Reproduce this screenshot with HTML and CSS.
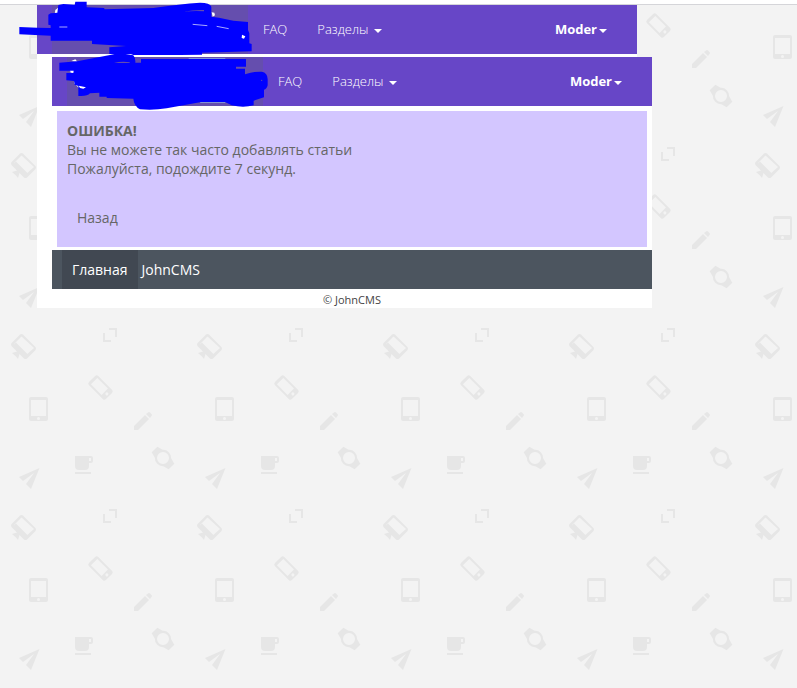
FILE: index.html
```
<!DOCTYPE html>
<html lang="ru">
<head>
    <meta charset="UTF-8">
    <meta name="viewport" content="width=device-width, initial-scale=1.0">
    <title>JohnCMS</title>
    <link rel="stylesheet" href="styles.css">
</head>
<body>

<!-- Background pattern -->
<svg class="pattern" aria-hidden="true">
    <defs>
        <pattern id="gadgets" x="0" y="144" width="186" height="181" patternUnits="userSpaceOnUse">
            <g fill="#e6e6e6">
                <!-- monitor -->
                <path fill-rule="evenodd" d="M20 9.500Q21.500 8.500 23 9.500L35.500 22Q36.500 23.500 35.500 25L27 33.500Q25.500 34.500 24 33.500L19.500 29L18 34L16 31.500L12 28L17 26.500L11.500 21Q10.500 19.500 11.500 18Z M21.500 11.500L14 19L25.500 30.500L34 23Z"/>
                <path d="M13 18L26 31L24.500 33L12 21Z M14 19L27 32L28 29.500L16 17.500Z"/>
                <!-- expand -->
                <path d="M109 3H117V12H115V5H109Z M103 8H105V15H111V17H103Z"/>
                <!-- phone -->
                <g transform="translate(100.500 62.500) rotate(-45)">
                    <path fill-rule="evenodd" d="M-4 -12H4Q6.500 -12 6.500 -10V10Q6.500 12 4 12H-4Q-6.500 12 -6.500 10V-10Q-6.500 -12 -4 -12Z M-4.500 -9V6H4.500V-9Z M0 7.500A1.500 1.500 0 1 0 0 10.500A1.500 1.500 0 1 0 0 7.500Z"/>
                </g>
                <!-- tablet -->
                <path fill-rule="evenodd" d="M31 72H46Q48 72 48 74V94Q48 96 46 96H31Q29 96 29 94V74Q29 72 31 72Z M31 75V91H46V75Z M38.500 92A1.500 1.500 0 1 0 38.500 95A1.500 1.500 0 1 0 38.500 92Z"/>
                <!-- pencil -->
                <path d="M134 105V101L145 90L149 94L138 105Z M146 89L148 87.500Q149 86.500 150 87.500L151.500 89Q152.500 90 151.500 91L150 93Z"/>
                <!-- cup -->
                <path fill-rule="evenodd" d="M75 131H91Q93 131 93 133V136Q93 138 91 138H89V141Q89 145 85 145H79Q75 145 75 141Z M89 133V136H91V133Z M75 147H91V149H75Z"/>
                <!-- watch -->
                <g transform="translate(163 133) rotate(-45)">
                    <path fill-rule="evenodd" d="M-4 -12H4L5.500 -6A8 8 0 0 1 5.500 6L4 12H-4L-5.500 6A8 8 0 0 1 -5.500 -6Z M0 -6A6 6 0 1 0 0 6A6 6 0 1 0 0 -6Z"/>
                </g>
                <!-- paper plane -->
                <path d="M39.500 143L19 152L23 156L34 148L26 159L31 164Z"/>
            </g>
        </pattern>
    </defs>
    <rect width="100%" height="100%" fill="url(#gadgets)"/>
</svg>

<div class="topline"></div>

<div class="page">
    <nav class="navbar">
        <a class="brand" href="#" aria-label="Главная страница"></a>
        <a class="nav-link" href="#">FAQ</a>
        <button class="nav-link" type="button">Разделы <span class="caret"></span></button>
        <button class="nav-link user" type="button">Moder<span class="caret"></span></button>
        <svg class="scribble first" viewBox="57 0 705 168" aria-hidden="true">
            <path fill="#fff" d="M166 30L176 22V42L164 42Z"/>
            <path fill="#00f" d="M58 81L112 83L152 84V76L145 74V44L152 40L172 38L175 15L190 12L224 14L226 5H260V22L312 24L314 28L460 24Q540 12 600 8Q630 8 634 20V50L657 53L700 62L744 66V90L748 100V130L755 132V154L606 158V164L540 165H400L392 162H328V142L378 138L276 132V122H152V107L58 103Z"/>
            <path fill="#654eae" d="M552 35Q580 29 612 30V34Q585 32 552 35Z"/>
            <path fill="none" stroke="#fff" stroke-width="2" d="M578 73L622 77M650 79L686 86M178 81H202"/>
            <path fill="#fff" d="M635 37L643 38L645 46L638 50Z M726 104L736 109L732 116L725 114Z"/>
        </svg>
    </nav>

    <div class="inner">
        <nav class="navbar">
            <a class="brand" href="#" aria-label="Главная страница"></a>
            <a class="nav-link" href="#">FAQ</a>
            <button class="nav-link" type="button">Разделы <span class="caret"></span></button>
            <button class="nav-link user" type="button">Moder<span class="caret"></span></button>
            <svg class="scribble second" viewBox="177 159 630 174" aria-hidden="true">
                <path fill="#fff" d="M214 183L226 178L232 185Z M209 212H222V220H212Z M222 242L258 262L240 267L222 250Z"/>
                <path fill="none" stroke="#9cc8ef" stroke-width="2" d="M566 176H676M600 307H676"/>
                <path fill="#00f" d="M178 188L232 184L330 165Q350 160 372 161L400 166Q407 174 406 188H423V177H738V200H708V206H735V223Q760 214 785 215Q804 218 803 240V256Q800 268 792 269V292L761 302V316Q730 324 695 316L675 306H604L500 325Q460 332 420 328Q402 318 400 296L320 294V290H298V278L270 280Q262 290 235 288V258L224 254L222 243L199 241V219H212L210 212H178Z"/>
                <path fill="#654eae" d="M342 189Q365 183 389 187V189Z"/>
                <path fill="#fff" d="M210 212H221L220 219L213 218Z M236 257L258 262L250 266L240 264Z"/>
                <circle cx="785" cy="241" r="2" fill="#654eae"/>
            </svg>
        </nav>

        <div class="error">
            <b>ОШИБКА!</b><br>
            Вы не можете так часто добавлять статьи<br>
            Пожалуйста, подождите 7 секунд.
            <p><a class="back" href="#">Назад</a></p>
        </div>

        <div class="bottom-bar">
            <a class="active" href="#">Главная</a>
            <a href="#">JohnCMS</a>
        </div>

        <footer class="copyright">© JohnCMS</footer>
    </div>
</div>

</body>
</html>
```
FILE: styles.css
```
* {
    box-sizing: border-box;
}
body {
    margin: 0;
    background: #f3f3f3;
    font-family: "Open Sans", sans-serif;
    font-size: 14px;
    line-height: 19px;
    color: #666;
}
a {
    color: inherit;
    text-decoration: none;
}
.pattern {
    position: fixed;
    top: 0;
    left: 0;
    width: 100%;
    height: 100%;
    z-index: -1;
}
.topline {
    height: 5px;
    background: #fff;
    border-bottom: 1px solid #d5d5d9;
}
.page {
    max-width: 600px;
    margin-left: 37px;
    background: #fff;
}
.inner {
    margin: 3px -15px 0 15px;
    background: #fff;
}
.navbar {
    position: relative;
    display: flex;
    height: 49px;
    padding: 0 15px;
    background: #6746c7;
}
.brand {
    flex: 0 1 196px;
    background: #654eae;
}
.nav-link {
    display: flex;
    align-items: center;
    padding: 0 15px;
    border: none;
    background: none;
    font-family: inherit;
    font-size: 13px;
    font-weight: 300;
    line-height: 19px;
    color: #fff;
    cursor: pointer;
}
.caret {
    margin: 2px 0 0 6px;
    border-top: 4px solid #fff;
    border-left: 4px solid transparent;
    border-right: 4px solid transparent;
}
.user {
    margin-left: auto;
    font-weight: bold;
}
.user .caret {
    margin-left: 2px;
}
.scribble {
    position: absolute;
}
.first {
    top: -5px;
    left: -18px;
    width: 235px;
    height: 56px;
}
.second {
    top: -4px;
    left: 7px;
    width: 210px;
    height: 58px;
}
.error {
    margin: 5px 5px 3px;
    padding: 10px 10px 20px;
    background: #d3c6ff;
}
.error p {
    margin: 30px 0 0;
    padding: 0 10px;
}
.bottom-bar {
    display: flex;
    gap: 4px;
    padding: 0 10px;
    background: #4c555f;
    color: #fff;
}
.bottom-bar a {
    padding: 10px 0;
}
.bottom-bar .active {
    padding: 10px;
    background: #414852;
}
.copyright {
    padding-top: 2px;
    font-size: 11px;
    line-height: 17px;
    text-align: center;
    color: #444;
}
```
